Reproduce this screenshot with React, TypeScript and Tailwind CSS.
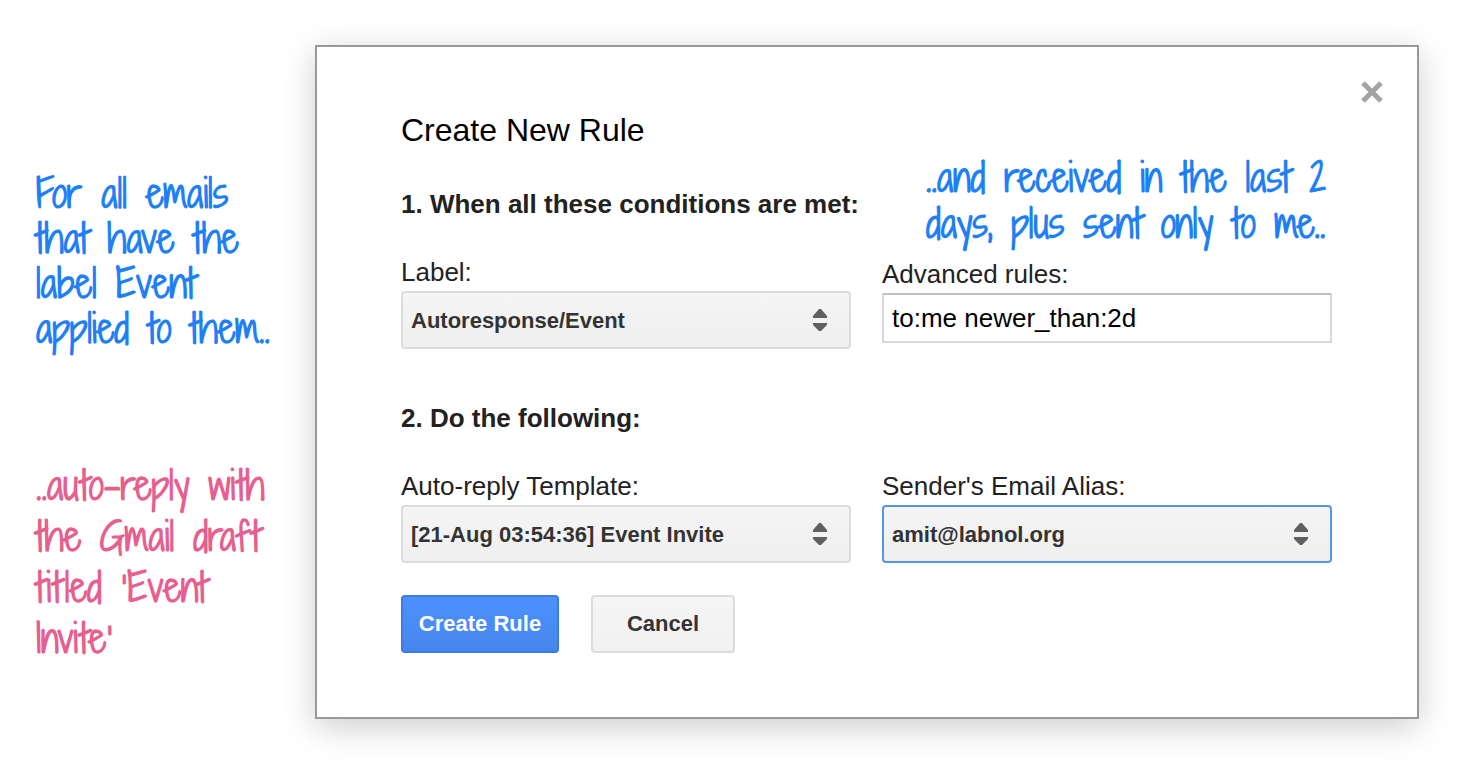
import { ReactNode, useState } from "react";

interface SelectFieldProps {
  id: string;
  label: string;
  options: string[];
  active?: boolean;
}

const SelectField = ({ id, label, options, active }: SelectFieldProps) => {
  const [value, setValue] = useState(options[0]);

  return (
    <div>
      <label htmlFor={id} className="block text-[26px] leading-[30px] mb-1">
        {label}
      </label>
      <div className="relative">
        <select
          id={id}
          value={value}
          onChange={(e) => setValue(e.target.value)}
          className={`block w-full h-[58px] appearance-none rounded-sm border-2 bg-linear-to-b from-[#f5f5f5] to-[#efefef] pl-2 pr-12 text-[22px] font-bold text-[#333] outline-none ${
            active ? "border-[#5a94e8]" : "border-[#dcdcdc]"
          }`}
        >
          {options.map((option) => (
            <option key={option}>{option}</option>
          ))}
        </select>
        <svg
          viewBox="0 0 14 22"
          className="pointer-events-none absolute right-6 top-[18px] w-[14px] h-[22px] fill-[#606060]"
        >
          <path d="M6 0H8L14 7V9H0V7z" />
          <path d="M6 22H8L14 16V14H0V16z" />
        </svg>
      </div>
    </div>
  );
};

interface NoteProps {
  lines: string[];
  className: string;
}

const Note = ({ lines, className }: NoteProps) => (
  <p
    className={`font-['Shadows_Into_Light_Two','Shadows_Into_Light','Lato',cursive] text-[38px] font-bold whitespace-nowrap ${className}`}
  >
    {lines.map((line) => (
      <span key={line} className="block">
        {line}
      </span>
    ))}
  </p>
);

const SectionTitle = ({ children }: { children: ReactNode }) => (
  <h2 className="text-[26px] leading-[30px] font-bold whitespace-nowrap">
    {children}
  </h2>
);

const App = () => {
  const [query, setQuery] = useState("to:me newer_than:2d");

  return (
    <main className="flex items-start bg-white pt-[45px] pr-[54px] pb-16 font-['Liberation_Sans',Arial,sans-serif] text-[#222]">
      <aside className="w-[315px] shrink-0 pl-9 pt-[126px]">
        <Note
          className="leading-[45px] text-[#1f80f5]"
          lines={[
            "For all emails",
            "that have the",
            "label Event",
            "applied to them..",
          ]}
        />
        <Note
          className="mt-[109px] leading-[51px] text-[#e65f8e]"
          lines={[
            "..auto–reply with",
            "the Gmail draft",
            "titled ’Event",
            "Invite’",
          ]}
        />
      </aside>

      <section
        role="dialog"
        aria-labelledby="dialog-title"
        className="relative flex-1 border-2 border-[#999] bg-white pt-[63px] pb-16 pl-[84px] pr-[85px] shadow-[0_8px_32px_rgba(0,0,0,0.2)]"
      >
        <button
          type="button"
          aria-label="Close"
          className="absolute right-[33px] top-[33px]"
        >
          <svg
            viewBox="0 0 24 24"
            className="w-6 h-6 stroke-[#a3a3a3]"
            strokeWidth="5"
          >
            <path d="M3 3L21 21M21 3L3 21" />
          </svg>
        </button>

        <form onSubmit={(e) => e.preventDefault()}>
          <div className="grid grid-cols-2 items-start gap-x-[31px] mb-[10px]">
            <div>
              <h1
                id="dialog-title"
                className="text-[32px] leading-[40px] text-black mb-[39px]"
              >
                Create New Rule
              </h1>
              <SectionTitle>1. When all these conditions are met:</SectionTitle>
            </div>
            <Note
              className="pl-11 pt-[45px] leading-[46px] text-[#1f80f5]"
              lines={[
                "..and received in the last 2",
                "days, plus sent only to me..",
              ]}
            />
          </div>

          <div className="grid grid-cols-2 items-start gap-x-[31px] mb-[54px]">
            <SelectField
              id="label"
              label="Label:"
              options={["Autoresponse/Event"]}
            />
            <div className="pt-0.5">
              <label
                htmlFor="rules"
                className="block text-[26px] leading-[30px] mb-1"
              >
                Advanced rules:
              </label>
              <input
                id="rules"
                type="text"
                value={query}
                onChange={(e) => setQuery(e.target.value)}
                className="block w-full h-[50px] border-2 border-[#d9d9d9] border-t-[#c0c0c0] bg-white px-2 text-[26px] text-black outline-none"
              />
            </div>
          </div>

          <SectionTitle>2. Do the following:</SectionTitle>

          <div className="grid grid-cols-2 gap-x-[31px] mt-[38px]">
            <SelectField
              id="template"
              label="Auto-reply Template:"
              options={["[21-Aug 03:54:36] Event Invite"]}
            />
            <SelectField
              id="alias"
              label="Sender's Email Alias:"
              options={["amit@labnol.org"]}
              active
            />
          </div>

          <div className="flex gap-8 mt-8">
            <button
              type="submit"
              className="w-[158px] h-[58px] rounded-sm border-2 border-[#3d7de0] bg-linear-to-b from-[#4d90fe] to-[#4787ed] pb-0.5 text-[22px] font-bold text-white"
            >
              Create Rule
            </button>
            <button
              type="button"
              className="w-[144px] h-[58px] rounded-sm border-2 border-[#dcdcdc] bg-linear-to-b from-[#f5f5f5] to-[#f1f1f1] pb-0.5 text-[22px] font-bold text-[#333]"
            >
              Cancel
            </button>
          </div>
        </form>
      </section>
    </main>
  );
};

export default App;
